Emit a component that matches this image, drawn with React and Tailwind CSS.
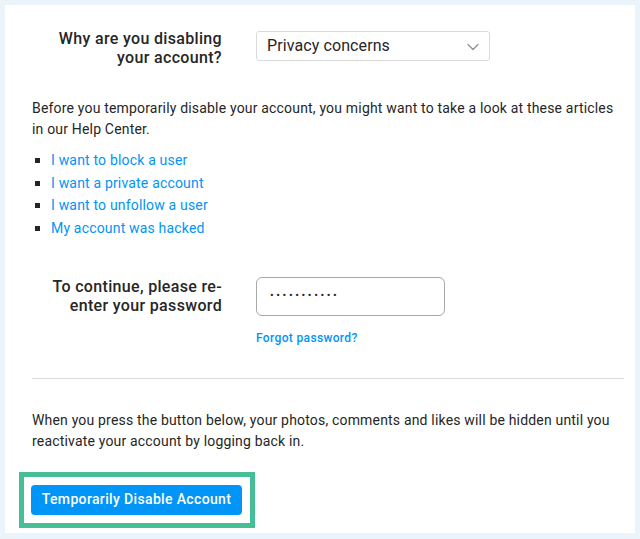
import React, { useState } from 'react';

const links = [
  'I want to block a user',
  'I want a private account',
  'I want to unfollow a user',
  'My account was hacked',
];

function Chevron() {
  return (
    <svg width="12" height="8" viewBox="0 0 12 8" fill="none">
      <path d="M1 1.5l5 5 5-5" stroke="#8e8e8e" strokeWidth="1.2" strokeLinecap="round" strokeLinejoin="round" />
    </svg>
  );
}

export default function App() {
  const [reason, setReason] = useState('Privacy concerns');
  const [password, setPassword] = useState('•••••••••••');

  return (
    <div className="min-h-[539px] bg-[#ebf4fb] px-[5px] pt-[5px] pb-[6px] font-['Roboto','Liberation_Sans',sans-serif] tracking-[0.18px] text-[#262626]">
      <div className="bg-white h-[528px] pl-[27px] pr-[11px] pt-[24px]">
        {/* Reason row */}
        <div className="flex items-start">
          <div className="w-[191px] text-right text-[16px] leading-[19px] font-medium tracking-[0.33px] pr-[1px]">
            Why are you disabling<br />your account?
          </div>
          <div className="ml-[33px] mt-[2px] relative w-[234px] h-[30px] border border-[#dbdbdb] rounded-[3px] flex items-center pl-[10px]">
            <span className="text-[16px] tracking-[0.1px]">{reason}</span>
            <span className="absolute right-[10px] top-[11px]"><Chevron /></span>
          </div>
        </div>

        {/* Help articles */}
        <p className="mt-[31px] text-[14px] leading-[21px]">
          Before you temporarily disable your account, you might want to take a look at these articles in our Help Center.
        </p>
        <ul className="mt-[10px] flex flex-col gap-[1.5px] text-[14px] leading-[21px]">
          {links.map((l) => (
            <li key={l} className="flex items-center">
              <span className="w-[5px] h-[5px] bg-[#262626] ml-[3px] mr-[11px]" />
              <a href="#" className="text-[#0095f6]">{l}</a>
            </li>
          ))}
        </ul>

        {/* Password row */}
        <div className="mt-[38px] flex items-start">
          <div className="w-[191px] text-right text-[16px] leading-[19px] font-medium tracking-[0.33px] pr-[1px]">
            To continue, please re-<br />enter your password
          </div>
          <div className="ml-[33px] flex flex-col">
            <div className="w-[189px] h-[39px] border border-[#a8a8a8] rounded-[6px] flex items-center pl-[13px] text-[11px] tracking-[2.6px]">
              {password}
            </div>
            <a href="#" className="mt-[15px] text-[12px] leading-[15px] font-medium tracking-[0.35px] text-[#0095f6]">Forgot password?</a>
          </div>
        </div>

        <div className="mt-[32px] h-px bg-[#dbdbdb]" />

        <p className="mt-[31px] text-[14px] leading-[21px]">
          When you press the button below, your photos, comments and likes will be hidden until you reactivate your account by logging back in.
        </p>

        <div className="mt-[20px] -ml-[13px] w-[236px] h-[56px] border-[5px] border-[#46be96] flex items-center pl-[7px]">
          <button className="h-[30px] w-[211px] rounded-[4px] bg-[#0095f6] text-white text-[14px] font-medium tracking-[0.35px]">
            Temporarily Disable Account
          </button>
        </div>
      </div>
    </div>
  );
}
